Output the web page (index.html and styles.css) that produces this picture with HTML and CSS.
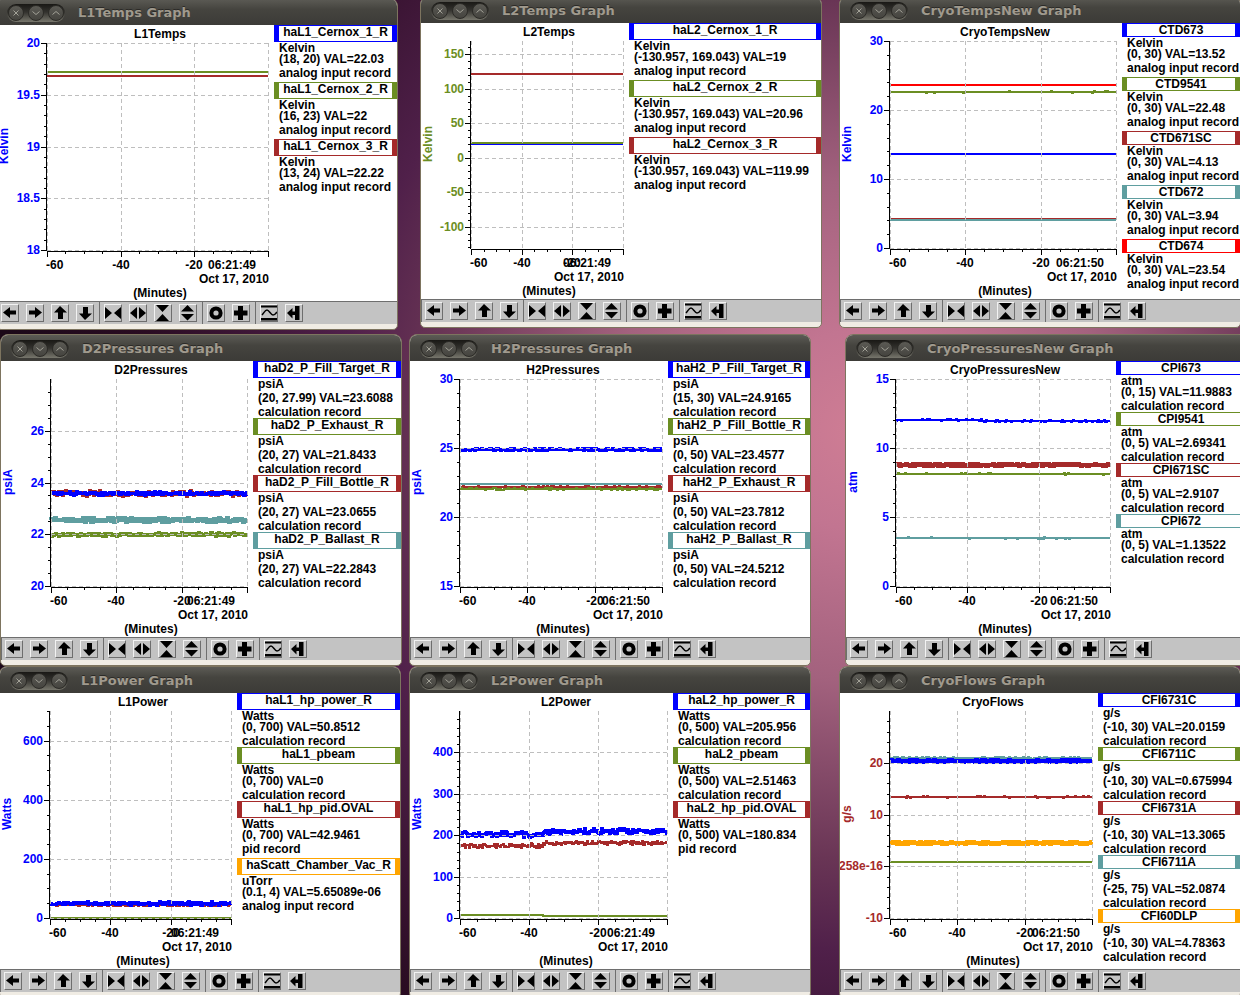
FILE: index.html
```html
<!DOCTYPE html>
<html lang="en">
<head>
<meta charset="utf-8">
<meta name="viewport" content="width=device-width, initial-scale=1">
<title>Strip charts</title>
<link rel="stylesheet" href="styles.css">
</head>
<body>
<svg class="sprite" aria-hidden="true">
  <symbol id="i-left" viewBox="0 0 16 16"><path d="M1 7.500 8 2v3.500h6v4H8V13z"/></symbol>
  <symbol id="i-right" viewBox="0 0 16 16"><path d="M15 7.500 8 2v3.500H2v4h6V13z"/></symbol>
  <symbol id="i-up" viewBox="0 0 16 16"><path d="M8 1 2 7.500h4V14h5V7.500h4z"/></symbol>
  <symbol id="i-down" viewBox="0 0 16 16"><path d="M8 15 2 8.500h4V2h5v6.500h4z"/></symbol>
  <symbol id="i-hin" viewBox="0 0 16 16"><path d="M0 2v12l7-6zM16 2v12L9 8z"/></symbol>
  <symbol id="i-hout" viewBox="0 0 16 16"><path d="M7 2v12L0 8zM9 2v12l7-6z"/></symbol>
  <symbol id="i-vin" viewBox="0 0 16 16"><path d="M1 0h13L7.500 7zM1 16h13L7.500 9z"/></symbol>
  <symbol id="i-vout" viewBox="0 0 16 16"><path d="M1 6.500h13L7.500 0zM1 9h13l-6.500 6.500z"/></symbol>
  <symbol id="i-ring" viewBox="0 0 16 16"><circle cx="8" cy="8" r="4.600" fill="none" stroke="#000" stroke-width="4"/></symbol>
  <symbol id="i-plus" viewBox="0 0 16 16"><path d="M5 1h5v4.500h4.500v5H10V15H5v-4.500H1v-5h4z"/></symbol>
  <symbol id="i-wave" viewBox="0 0 16 16"><path d="M0 .5h16v2H0zM0 13h16v2.500H0z"/><path d="M1 10C3 8 4 5 6 5s4 5 6 5 3-1.500 4-3" fill="none" stroke="#000" stroke-width="1.500"/></symbol>
  <symbol id="i-end" viewBox="0 0 16 16"><path d="M1 8 6.500 3v3.500H9V1h4.500v14H9V10H6.500v3.500z"/></symbol>
  <symbol id="w-close" viewBox="0 0 14 14"><path d="m4.500 4.500 5 5m0-5-5 5"/></symbol>
  <symbol id="w-min" viewBox="0 0 14 14"><path d="m3.500 5.500 3.500 3 3.500-3"/></symbol>
  <symbol id="w-max" viewBox="0 0 14 14"><path d="m3.500 8.500 3.500-3 3.500 3"/></symbol>
</svg>
<main class="desktop" id="desktop"></main>
<script src="app.js"></script>
</body>
</html>
```
FILE: styles.css
```css
* { box-sizing: border-box; }

body {
  margin: 0;
  font: bold 12px/12px "Liberation Sans", Arial, sans-serif;
  color: #000;
}

.sprite { position: absolute; width: 0; height: 0; }

.desktop {
  position: relative;
  height: 100vh;
  overflow: hidden;
  background: radial-gradient(circle at 860px 430px, #cf7d94 0, #c27591 100px, #a3627e 250px, #693555 430px, #50204a 520px, #2a0c22 720px, #1c0818 860px);
}

.window {
  position: absolute;
  display: flex;
  flex-direction: column;
  overflow: hidden;
  border: 1px solid #7d745f;
  border-radius: 8px 8px 5px 5px;
  background: #f0ece4;
  padding-bottom: 5px;
}

.titlebar {
  display: flex;
  align-items: center;
  gap: 13px;
  height: 26px;
  padding: 1px 0 0 10px;
  background: linear-gradient(#5c5b55, #45443f 40%, #3c3b37);
}

.titlebar h2 {
  margin: 0;
  font: bold 13px/18px "DejaVu Sans", sans-serif;
  color: #a09a8e;
  text-shadow: 0 -1px 0 #2b2a27;
  white-space: nowrap;
}

.controls {
  display: flex;
  gap: 4px;
  padding: 1px;
  border-radius: 9px;
  background: linear-gradient(#191815, #33322e 45%, #77766c);
}

.controls button {
  display: flex;
  width: 16px;
  height: 16px;
  padding: 0;
  border: 1px solid #2c2b27;
  border-radius: 50%;
  background: linear-gradient(#5b5a54, #45443f);
}

.controls svg {
  width: 14px;
  height: 14px;
  fill: none;
  stroke: #a3a298;
  stroke-width: 1;
}

.graph {
  display: flex;
  height: 276px;
  background: #fff;
}

.plot { flex: 1; min-width: 0; height: 276px; overflow: hidden; }
.plot text { fill: #000; }
.axis, .grid { fill: none; shape-rendering: crispEdges; }
.axis { stroke: #000; }
.grid { stroke: #bebebe; stroke-dasharray: 4 3; }
.series { fill: none; shape-rendering: crispEdges; }

.plot .blue { fill: #0000ff; }
.plot .olive { fill: #6b8e23; }
.plot .brown { fill: #a52a2a; }
.series.s-blue { stroke: #0000ff; }
.series.s-olive { stroke: #6b8e23; }
.series.s-brown { stroke: #a52a2a; }
.series.s-teal { stroke: #5f9ea0; }
.series.s-red { stroke: #ff0000; }
.series.s-orange { stroke: #ffa500; }

.legend {
  flex: none;
  margin: 0;
  padding: 0;
  list-style: none;
  white-space: nowrap;
  overflow: hidden;
}

.legend li { padding-bottom: 1px; }
.legend p { height: 11px; margin: 0; padding-left: 5px; }
.legend p.deep { height: 14px; }

.legend h3 {
  display: flex;
  justify-content: center;
  height: 14px;
  margin: 0;
  border: solid;
  border-width: 1px 5px;
  font-size: 12px;
}
.legend h3.deep { height: 17px; }
.legend .k-blue { border-color: #0000ff; }
.legend .k-olive { border-color: #6b8e23; }
.legend .k-brown { border-color: #a52a2a; }
.legend .k-teal { border-color: #5f9ea0; }
.legend .k-red { border-color: #ff0000; }
.legend .k-orange { border-color: #ffa500; }

.toolbar {
  display: flex;
  height: 23px;
  border: solid #6e6e6e;
  border-width: 1px 0 0 1px;
  background: #c3c3c3;
}

.group {
  display: flex;
  gap: 7px;
  padding: 2px 5px 2px 4px;
  border-right: 1px solid #6e6e6e;
}
.group:first-child { padding-left: 3px; }
.group:last-child { border: 0; }

.group button {
  display: flex;
  width: 18px;
  height: 18px;
  padding: 0;
  border: 1px solid;
  border-color: #f2f2f2 #6e6e6e #6e6e6e #f2f2f2;
  background: #c3c3c3;
}
.group svg { width: 16px; height: 16px; }
```
FILE: app.js
```js
const REC_A = "analog input record";
const REC_C = "calculation record";

// x, y: window origin; legend: legend width; axis: [min, max, major step, minor divisions].
// Each trace is [colour, y before and after the shift, noise amplitude, line width].
const graphs = [
  { x: -4, y: -2, name: "L1Temps", unit: "Kelvin", tone: "blue", time: "06:21:49", legend: 123,
    axis: [18, 20, 0.5, 5],
    traces: [["brown", 51, 51, 0, 2], ["olive", 47, 47, 0, 2]],
    keys: [["blue", "haL1_Cernox_1_R", "Kelvin", "(18, 20) VAL=22.03", REC_A],
           ["olive", "haL1_Cernox_2_R", "Kelvin", "(16, 23) VAL=22", REC_A],
           ["brown", "haL1_Cernox_3_R", "Kelvin", "(13, 24) VAL=22.22", REC_A]] },
  { x: 420, y: -4, name: "L2Temps", unit: "Kelvin", tone: "olive", time: "06:21:49", legend: 192,
    axis: [-130.957, 169.043, 50, 5],
    traces: [["brown", 51, 51, 0, 2], ["blue", 121, 121, 0, 2], ["olive", 120, 120, 0, 2]],
    keys: [["blue", "haL2_Cernox_1_R", "Kelvin", "(-130.957, 169.043) VAL=19", REC_A],
           ["olive", "haL2_Cernox_2_R", "Kelvin", "(-130.957, 169.043) VAL=20.96", REC_A],
           ["brown", "haL2_Cernox_3_R", "Kelvin", "(-130.957, 169.043) VAL=119.99", REC_A]] },
  { x: 839, y: -4, name: "CryoTempsNew", unit: "Kelvin", tone: "blue", time: "06:21:50", legend: 118,
    axis: [0, 30, 10, 5],
    traces: [["red", 62, 62, 0, 2], ["olive", 69, 69, 0.4, 2], ["blue", 131, 131, 0, 2],
             ["brown", 196, 196, 0, 2], ["teal", 197, 197, 0, 2]],
    keys: [["blue", "CTD673", "Kelvin", "(0, 30) VAL=13.52", REC_A],
           ["olive", "CTD9541", "Kelvin", "(0, 30) VAL=22.48", REC_A],
           ["brown", "CTD671SC", "Kelvin", "(0, 30) VAL=4.13", REC_A],
           ["teal", "CTD672", "Kelvin", "(0, 30) VAL=3.94", REC_A],
           ["red", "CTD674", "Kelvin", "(0, 30) VAL=23.54", REC_A]] },
  { x: 0, y: 334, name: "D2Pressures", unit: "psiA", tone: "blue", time: "06:21:49", legend: 148,
    axis: [20, 28, 2, 4],
    traces: [["brown", 132, 132, 2, 3], ["blue", 132, 132, 1.2, 3], ["teal", 159, 159, 1.6, 4], ["olive", 173, 173, 1.3, 3]],
    keys: [["blue", "haD2_P_Fill_Target_R", "psiA", "(20, 27.99) VAL=23.6088", REC_C],
           ["olive", "haD2_P_Exhaust_R", "psiA", "(20, 27) VAL=21.8433", REC_C],
           ["brown", "haD2_P_Fill_Bottle_R", "psiA", "(20, 27) VAL=23.0655", REC_C],
           ["teal", "haD2_P_Ballast_R", "psiA", "(20, 27) VAL=22.2843", REC_C]] },
  { x: 409, y: 334, name: "H2Pressures", unit: "psiA", tone: "blue", time: "06:21:50", legend: 142,
    axis: [15, 30, 5, 5],
    traces: [["blue", 88, 88, 0.8, 3], ["teal", 123, 123, 0, 2], ["brown", 126, 126, 0.6, 2], ["olive", 128, 128, 0.6, 2]],
    keys: [["blue", "haH2_P_Fill_Target_R", "psiA", "(15, 30) VAL=24.9165", REC_C],
           ["olive", "haH2_P_Fill_Bottle_R", "psiA", "(0, 50) VAL=23.4577", REC_C],
           ["brown", "haH2_P_Exhaust_R", "psiA", "(0, 50) VAL=23.7812", REC_C],
           ["teal", "haH2_P_Ballast_R", "psiA", "(0, 50) VAL=24.5212", REC_C]] },
  { x: 845, y: 334, name: "CryoPressuresNew", unit: "atm", tone: "blue", time: "06:21:50", legend: 130,
    axis: [0, 15, 5, 5],
    traces: [["blue", 59, 60, 0.6, 2], ["brown", 104, 104, 0.9, 4], ["olive", 113, 113, 0.4, 2], ["teal", 177, 177, 0.4, 2]],
    keys: [["blue", "CPI673", "atm", "(0, 15) VAL=11.9883", REC_C],
           ["olive", "CPI9541", "atm", "(0, 5) VAL=2.69341", REC_C],
           ["brown", "CPI671SC", "atm", "(0, 5) VAL=2.9107", REC_C],
           ["teal", "CPI672", "atm", "(0, 5) VAL=1.13522", REC_C]] },
  { x: -1, y: 666, name: "L1Power", unit: "Watts", tone: "blue", time: "06:21:49", legend: 163,
    axis: [0, 700, 200, 4],
    traces: [["brown", 212, 212, 1, 2], ["blue", 210, 210, 1.2, 3], ["olive", 225, 225, 0, 2]],
    keys: [["blue", "haL1_hp_power_R", "Watts", "(0, 700) VAL=50.8512", REC_C],
           ["olive", "haL1_pbeam", "Watts", "(0, 700) VAL=0", REC_C],
           ["brown", "haL1_hp_pid.OVAL", "Watts", "(0, 700) VAL=42.9461", "pid record"],
           ["orange", "haScatt_Chamber_Vac_R", "uTorr", "(0.1, 4) VAL=5.65089e-06", REC_A]] },
  { x: 409, y: 666, name: "L2Power", unit: "Watts", tone: "blue", time: "06:21:49", legend: 137,
    axis: [0, 500, 100, 5],
    traces: [["brown", 153, 150, 1.8, 2], ["blue", 141, 138, 2.2, 3], ["olive", 222, 223, 0.3, 2]],
    keys: [["blue", "haL2_hp_power_R", "Watts", "(0, 500) VAL=205.956", REC_C],
           ["olive", "haL2_pbeam", "Watts", "(0, 500) VAL=2.51463", REC_C],
           ["brown", "haL2_hp_pid.OVAL", "Watts", "(0, 500) VAL=180.834", "pid record"]] },
  { x: 839, y: 666, name: "CryoFlows", unit: "g/s", tone: "brown", time: "06:21:50", legend: 142,
    axis: [-10, 30, 10, 5], zero: "258e-16",
    traces: [["teal", 65, 65, 0.7, 2], ["blue", 68, 68, 0.7, 4], ["brown", 104, 104, 0.5, 2],
             ["orange", 150, 150, 0.8, 4], ["olive", 169, 169, 0, 2]],
    keys: [["blue", "CFI6731C", "g/s", "(-10, 30) VAL=20.0159", REC_C],
           ["olive", "CFI6711C", "g/s", "(-10, 30) VAL=0.675994", REC_C],
           ["brown", "CFI6731A", "g/s", "(-10, 30) VAL=13.3065", REC_C],
           ["teal", "CFI6711A", "g/s", "(-25, 75) VAL=52.0874", REC_C],
           ["orange", "CFI60DLP", "g/s", "(-10, 30) VAL=4.78363", REC_C]] }
];

const LEFT = 50, TOP = 18, BOTTOM = 225, WIDTH = 400;

let seed = 7;
function random() {
  seed = (seed * 16807) % 2147483647;
  return seed / 2147483647;
}

function label(x, y, text, anchor, tone = "") {
  return `<text x="${x}" y="${y}" text-anchor="${anchor}" class="${tone}">${text}</text>`;
}

function plot(g) {
  const right = WIDTH - g.legend - 6;
  const span = right - LEFT;
  const [min, max, step, parts] = g.axis;
  const toY = v => Math.round(BOTTOM - (v - min) / (max - min) * (BOTTOM - TOP)) + 0.5;
  let grid = "", axis = `M49.5 ${TOP}V${BOTTOM + 1}M50 226.5H${right + 1}`;
  let text = "";

  const minor = step / parts;
  for (let i = Math.ceil(min / minor - 1e-6); i * minor <= max + 1e-6; i++) {
    const v = i * minor, y = toY(v), major = i % parts === 0;
    const open = g.name === "D2Pressures" || g.name === "L2Power" || g.name === "CryoFlows";
    if (open && v >= max - 1e-6) continue;
    axis += `M${major ? 44 : 47} ${y}H49`;
    if (major) {
      grid += `M50 ${y}H${right}`;
      const shown = g.zero && i === 0 ? g.zero : String(+v.toFixed(2));
      text += label(43, y + 3.5, shown, "end", g.tone);
    }
  }
  for (let i = 0; i <= 12; i++) {
    const x = Math.round(LEFT + span * i / 12) + 0.5, major = i % 4 === 0;
    axis += `M${x} 226V${major ? 232 : 229}`;
    if (major) grid += `M${x} ${TOP}V${BOTTOM}`;
  }

  // Samples are held flat between steps, on whole pixels.
  const lines = g.traces.map(([tone, before, after, noise, width]) => {
    const half = width % 2 / 2;
    let d = `M${LEFT} ${before + half}`;
    for (let x = LEFT; x < right; x++) {
      const base = x - LEFT < span * 0.4 ? before : after;
      const y = Math.round(base + (random() + random() - 1) * noise * 1.6) + half;
      d += `V${y}H${x + 1}`;
    }
    return `<path class="series s-${tone}" stroke-width="${width}" d="${d}"/>`;
  }).join("");

  const mid = Math.round((LEFT + right) / 2) + 2;
  text += label(mid, 13, g.name, "middle");
  text += label(49, 244, "-60", "start");
  text += label(Math.round(LEFT + span / 3), 244, "-40", "middle");
  text += label(Math.round(LEFT + span * 2 / 3), 244, "-20", "middle");
  text += label(right - 36, 244, g.time, "middle");
  text += label(right + 1, 258, "Oct 17, 2010", "end");
  text += label(mid, 272, "(Minutes)", "middle");
  text += `<text class="${g.tone}" text-anchor="middle" transform="translate(11 121) rotate(-90)">${g.unit}</text>`;

  return `<svg class="plot" role="img" aria-label="${g.name}">${lines}<path class="grid" d="${grid}"/><path class="axis" d="${axis}"/>${text}</svg>`;
}

const deep = s => /[_(gpy,]/.test(s) ? "deep" : "";

function legend(g) {
  const items = g.keys.map(([tone, name, ...rows]) =>
    `<li><h3 class="k-${tone} ${deep(name)}">${name}</h3>${rows.map(r => `<p class="${deep(r)}">${r}</p>`).join("")}</li>`);
  return `<ul class="legend" style="width:${g.legend}px">${items.join("")}</ul>`;
}

const button = (id, name) => `<button type="button" aria-label="${name}"><svg aria-hidden="true"><use href="#${id}"/></svg></button>`;

const tools = [
  [["i-left", "Scroll left"], ["i-right", "Scroll right"], ["i-up", "Scroll up"], ["i-down", "Scroll down"]],
  [["i-hin", "Compress time"], ["i-hout", "Expand time"], ["i-vin", "Compress range"], ["i-vout", "Expand range"]],
  [["i-ring", "Reset"], ["i-plus", "Zoom"]],
  [["i-wave", "Auto scale"], ["i-end", "Go to latest"]]
].map(set => `<div class="group">${set.map(([id, name]) => button(id, name)).join("")}</div>`).join("");

const controls = [["w-close", "Close"], ["w-min", "Minimize"], ["w-max", "Maximize"]]
  .map(([id, name]) => button(id, name)).join("");

document.getElementById("desktop").innerHTML = graphs.map(g => `
  <section class="window" style="left:${g.x}px;top:${g.y}px;width:${WIDTH + 2}px">
    <header class="titlebar"><div class="controls">${controls}</div><h2>${g.name} Graph</h2></header>
    <div class="graph">${plot(g)}${legend(g)}</div>
    <div class="toolbar" role="toolbar" aria-label="${g.name} tools">${tools}</div>
  </section>`).join("");
```
